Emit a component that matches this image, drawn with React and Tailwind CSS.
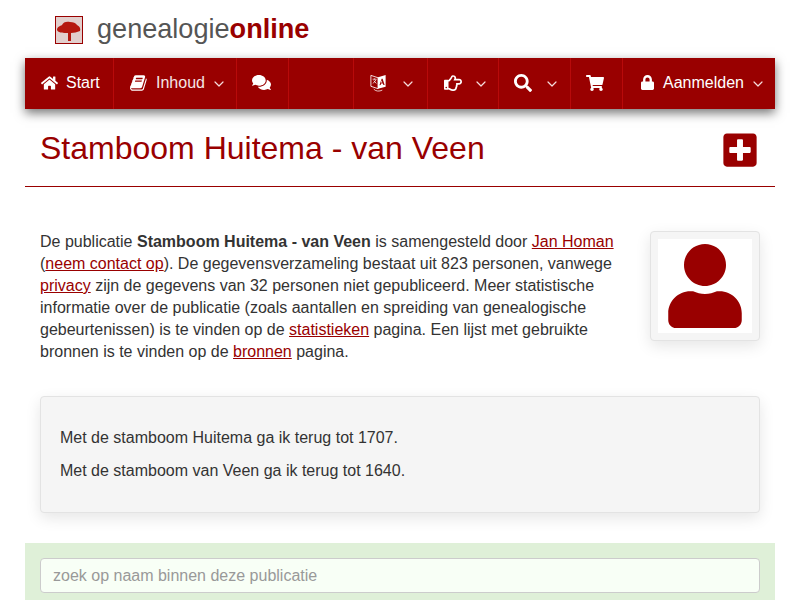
import { FaHome, FaComments, FaRegHandPointRight, FaSearch, FaShoppingCart, FaLock, FaPlusSquare, FaUser } from 'react-icons/fa';
import { LuChevronDown } from 'react-icons/lu';

function Chevron() {
  return <LuChevronDown className="w-[16px] h-[16px] mt-[3px] text-[#f5dcdc]" strokeWidth={1.8} />;
}

function NavItem({ className, children }) {
  return (
    <div className={`h-full pb-[2px] flex items-center border-r border-[#b80a0a] ${className}`}>
      {children}
    </div>
  );
}

function BookIcon() {
  return (
    <svg viewBox="0 0 1792 1792" fill="currentColor" className="w-[18px] h-[18px]">
      <path d="M1639 478q40 57 18 129l-275 906q-19 64-76.5 107.5t-122.5 43.5h-923q-77 0-148.5-53.5t-99.5-131.5q-24-67-2-127 0-4 3-27t4-37q1-8-3-21.5t-3-19.5q2-11 8-21t16.5-23.5 16.5-23.5q23-38 45-91.5t30-91.5q3-10 .5-30t-.5-28q3-11 17-28t17-23q21-36 42-92t25-90q1-9-2.5-32t.5-28q4-13 22-30.5t22-22.5q19-26 42.5-84.5t27.5-96.5q1-8-3-25.5t-2-26.5q2-8 9-18t18-23 17-21q8-12 16.5-30.5t15-35 16-36 19.5-32 26.5-23.5 36-11.5 47.5 5.5l-1 3q38-9 51-9h761q74 0 114 56t18 130l-274 906q-36 119-71.5 153.5t-128.5 34.5h-869q-27 0-38 15-11 16-1 43 24 70 144 70h923q29 0 56-15.5t35-41.5l300-987q7-22 5-57 38 15 59 43zm-1064 2q-4 13 2 22.5t20 9.5h608q13 0 25.5-9.5t16.5-22.5l21-64q4-13-2-22.5t-20-9.5h-608q-13 0-25.5 9.5t-16.5 22.5zm-83 256q-4 13 2 22.5t20 9.5h608q13 0 25.5-9.5t16.5-22.5l21-64q4-13-2-22.5t-20-9.5h-608q-13 0-25.5 9.5t-16.5 22.5z" />
    </svg>
  );
}

// two page language icon, left page outlined, right page filled
function LanguageIcon() {
  return (
    <svg viewBox="0 0 20 22" className="w-[19px] h-[21px]">
      <path d="M2 3.5 9.5 6v11.5L2 15z" fill="none" stroke="white" strokeWidth="0.9" />
      <path d="M9.5 5.5 17.5 3v12.5l-8 2z" fill="white" />
      <path d="M3.8 7.5h4M5.8 6.8v1M4.3 12 7.5 8M5 9l2.7 3" fill="none" stroke="white" strokeWidth="0.8" />
      <path d="M11 14l2.3-7h1l2.2 6.5h-1.4l-.4-1.4h-2l-.4 1.5zM12.6 11h1.4l-.7-2.3z" fill="#990000" />
      <path d="M5 18c2 2.4 6 2.6 9 1" fill="none" stroke="white" strokeWidth="0.8" />
    </svg>
  );
}

function TreeLogo() {
  return (
    <div className="w-[28px] h-[28px] border border-[#990000] bg-[#e2cfcd] flex items-center justify-center">
      <svg viewBox="0 0 26 26" className="w-[26px] h-[26px] blur-[0.5px]">
        <path d="M1 13c0-3 3-4 5-5 1-3 5-4 8-3 3 0 6 1 7 3 2 1 4 3 3 6-3 1-6 2-9 2v8h-3v-8c-4 0-10 0-11-3z" fill="#b5180f" />
      </svg>
    </div>
  );
}

export default function App() {
  return (
    <div className="w-[800px] h-[600px] overflow-hidden bg-white font-['Liberation_Sans',Arial,sans-serif] text-[16px] leading-[22px] text-[#333]">
      <div className="h-[58px] pl-[55px] pt-[16px] flex items-start gap-[14px]">
        <TreeLogo />
        <div className="-mt-[1px] text-[27.1px] leading-[28px] text-[#555]">
          genealogie<span className="font-bold text-[#990000]">online</span>
        </div>
      </div>

      <div className="mx-[25px] h-[51px] bg-[#990000] flex text-white shadow-[0_4px_10px_rgba(0,0,0,0.55)]">
        <NavItem className="w-[89px] pl-[16px] gap-[8px]">
          <FaHome className="w-[17px] h-[16px]" />
          <span>Start</span>
        </NavItem>
        <NavItem className="w-[123px] pl-[16px]">
          <BookIcon />
          <span className="ml-[8px] text-[#f5e6e6]">Inhoud</span>
          <span className="ml-[6px]"><Chevron /></span>
        </NavItem>
        <NavItem className="w-[52px] pl-[15px]">
          <FaComments className="w-[19px] h-[17px]" />
        </NavItem>
        <NavItem className="w-[65px]" />
        <NavItem className="w-[74px] pl-[15px]">
          <LanguageIcon />
          <span className="ml-[12px]"><Chevron /></span>
        </NavItem>
        <NavItem className="w-[71px] pl-[15px]">
          <FaRegHandPointRight className="w-[20px] h-[18px]" />
          <span className="ml-[10px]"><Chevron /></span>
        </NavItem>
        <NavItem className="w-[72px] pl-[15px]">
          <FaSearch className="w-[18px] h-[18px]" />
          <span className="ml-[12px]"><Chevron /></span>
        </NavItem>
        <NavItem className="w-[52px] pl-[15px]">
          <FaShoppingCart className="w-[18px] h-[16px]" />
        </NavItem>
        <div className="flex-1 h-full pb-[2px] flex items-center pl-[18px]">
          <FaLock className="w-[13px] h-[15px]" />
          <span className="ml-[9px]">Aanmelden</span>
          <span className="ml-[6px]"><Chevron /></span>
        </div>
      </div>

      <div className="mx-[25px] h-[78px] border-b border-[#990000] px-[15px] flex items-start justify-between">
        <h1 className="mt-[20px] text-[32px] leading-[38px] text-[#990000]">Stamboom Huitema - van Veen</h1>
        <FaPlusSquare className="mt-[22px] mr-[1px] w-[38px] h-[38px] text-[#990000]" />
      </div>

      <div className="mx-[40px] mt-[34px] flex justify-between items-start">
        <p className="w-[580px] mt-[10px]">
          De publicatie <b>Stamboom Huitema - van Veen</b> is samengesteld door <a className="text-[#990000] underline">Jan Homan</a> (<a className="text-[#990000] underline">neem contact op</a>). De gegevensverzameling bestaat uit 823 personen, vanwege <a className="text-[#990000] underline">privacy</a> zijn de gegevens van 32 personen niet gepubliceerd. Meer statistische informatie over de publicatie (zoals aantallen en spreiding van genealogische gebeurtenissen) is te vinden op de <a className="text-[#990000] underline">statistieken</a> pagina. Een lijst met gebruikte bronnen is te vinden op de <a className="text-[#990000] underline">bronnen</a> pagina.
        </p>
        <div className="mt-[10px] w-[110px] h-[110px] bg-[#f5f5f5] border border-[#e3e3e3] rounded-[4px] shadow-[0_5px_15px_rgba(0,0,0,0.1)] flex items-center justify-center">
          <div className="w-[94px] h-[94px] bg-white flex items-center justify-center">
            <FaUser className="w-[84px] h-[84px] text-[#990000]" />
          </div>
        </div>
      </div>

      <div className="mx-[40px] mt-[33px] h-[117px] bg-[#f5f5f5] border border-[#e3e3e3] rounded-[4px] shadow-[0_5px_15px_rgba(0,0,0,0.1)] pl-[19px] pt-[30px]">
        <p className="mb-[11px]">Met de stamboom Huitema ga ik terug tot 1707.</p>
        <p>Met de stamboom van Veen ga ik terug tot 1640.</p>
      </div>

      <div className="mx-[25px] mt-[30px] h-[100px] bg-[#dff0d8] px-[15px] pt-[15px]">
        <input
          type="text"
          placeholder="zoek op naam binnen deze publicatie"
          className="w-full h-[35px] bg-[#f8fff6] border border-[#ccc] rounded-[4px] px-[12px] text-[16px] placeholder:text-[#999]"
        />
      </div>
    </div>
  );
}
